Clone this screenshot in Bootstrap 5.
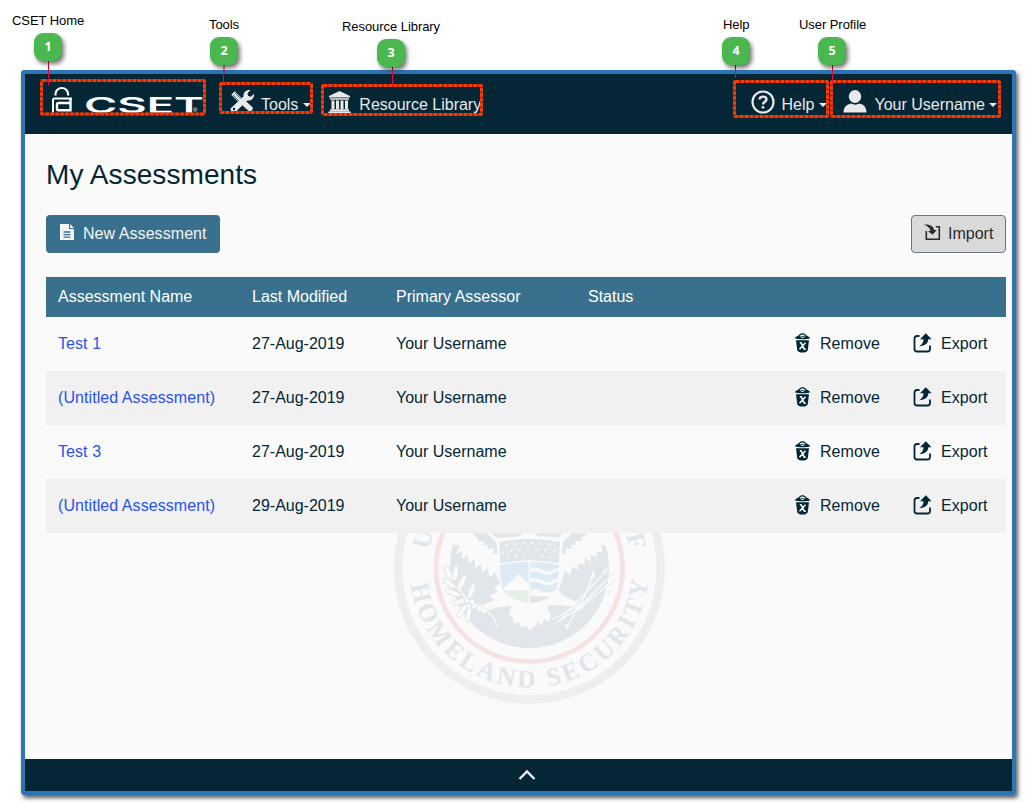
<!DOCTYPE html>
<html lang="en">
<head>
<meta charset="utf-8">
<title>CSET - My Assessments</title>
<link href="https://cdn.jsdelivr.net/npm/bootstrap@5.3.0/dist/css/bootstrap.min.css" rel="stylesheet">
<style>
body{font-family:"Liberation Sans",Arial,sans-serif;width:1025px;height:804px;overflow:hidden;background:#fff;color:#042635}
.app-frame{margin:70px 9px 0 21px;height:725px;border:4px solid #2e75b6;border-radius:3px;box-shadow:2px 3px 4px rgba(0,0,0,.65)}
.top-bar{height:60px;background:#042635;flex:none;padding-top:12px}
.top-bar .nav-link{color:#e9e9e9;padding:0;line-height:24px;white-space:nowrap;margin-top:2px}
.top-bar svg{flex:none;display:block}
.nav-text{margin:5px 0 0 7px}
.tick{border:4px solid transparent;border-top-color:#e9e9e9;border-bottom:0;margin:15px 0 0 4px;flex:none}
.page-main{background:#fafafa;padding:25px 6px 0 21px}
.page-main h1{font-size:28px;line-height:32px;margin:0 0 24px;font-weight:400;letter-spacing:.08px}
.btn-new{background:#38708e;color:#f4f4f4;height:38px;width:174px;border-radius:4px;padding:0 0 0 14px}
.btn-new:hover{background:#2f627d;color:#fff}
.btn-import{background:#d9d9d9;color:#2b2b2b;border:1px solid #6c757d;height:38px;width:95px;border-radius:4px;padding:0 0 0 13px}
.grid-table{margin:24px 0 0;table-layout:fixed;position:relative;z-index:1;width:960px;border-collapse:collapse}
.grid-table th{background:#38708e;color:#fff;font-weight:400;height:40px;padding:0 12px;line-height:24px}
.grid-table td{background:#fafafa;height:54px;padding:0 12px;line-height:24px;white-space:nowrap;vertical-align:middle}
.grid-table tr:nth-child(even) td{background:#f1f1f1}
.grid-table a{color:#2a52ea;text-decoration:none;letter-spacing:.07px}
.grid-table .act{padding:0}
.act div{display:flex;align-items:center;letter-spacing:.05px}
.act svg{margin:0 9px 3px 0;flex:none}
.seal{position:absolute;left:355px;top:386px}
.bottom-bar{height:32px;background:#042635;flex:none}
.notes{position:absolute;left:0;top:0;pointer-events:none}
.note-label{position:absolute;font-size:13px;line-height:16px;color:#000;white-space:nowrap;letter-spacing:-.06px}
.note-num{position:absolute;width:28px;height:28px;border-radius:9px;background:#4bb74f;color:#fff;font:bold 12.5px/28px "Open Sans","Liberation Sans",sans-serif;text-align:center;box-shadow:2px 3px 4px rgba(0,0,0,.55)}
</style>
</head>
<body class="position-relative">
<svg width="0" height="0" class="position-absolute">
  <symbol id="trash" viewBox="0 0 16 20">
    <path fill="#042635" d="M.3 5.200C1 3.800 3.200 3 4.400 2.200 5.200.8 6.500.3 8 .3s2.800.5 3.600 1.900C12.800 3 15 3.800 15.700 5.200 13 6.700 3 6.700.3 5.200zM1.500 7.300h13L13.300 17c-.3 1.500-2 2.600-5.300 2.600S3 18.500 2.700 17z"/>
    <path fill="none" stroke="#fafafa" stroke-width="1.100" d="M5.500 3.400Q8 1 10.500 3.400M6.500 4.300h3"/>
    <path fill="none" stroke="#fafafa" stroke-width="1.500" d="M5.300 9.800h1.300l3.200 6.400h1.500M11 9.800 5 16.300"/>
  </symbol>
  <symbol id="export" viewBox="0 0 19 20">
    <path fill="none" stroke="#042635" stroke-width="1.800" d="M6.500 3H4Q1.500 3 1.500 5.500v10.500Q1.500 18.500 4 18.500h10.500q2.500 0 2.500-2.500v-3.500"/>
    <path fill="#042635" d="M12.800.3 18.600 6.300h-3.300C15.300 10 12.500 12.800 6 13.200 9.500 11.500 10.500 9 10.500 6.300H7z"/>
  </symbol>
</svg>

<div class="app-frame d-flex flex-column">
  <nav class="top-bar d-flex align-items-start">
    <a href="#" aria-label="CSET Home" style="margin-left:25px">
      <svg width="155" height="36" viewBox="50 86 155 36">
        <path fill="none" stroke="#fff" stroke-width="2.200" d="M55.500 95.500v-1.500a6.300 6 0 0 1 12.600 0v1.500"/>
        <path fill="none" stroke="#fff" stroke-width="2" d="M72 98.500H54.500q-1.500 0-1.500 1.500V113"/>
        <path fill="none" stroke="#fff" stroke-width="2.400" d="M71 103H58.500q-1.500 0-1.500 1.500v4.500q0 1.300 1.500 1.300H70.500V98.500"/>
        <text x="84" y="112.500" font-family="Inter, sans-serif" font-size="21.500" font-weight="600" fill="#fff" textLength="120" lengthAdjust="spacingAndGlyphs">CSET</text>
        <text x="193" y="112" font-size="6" fill="#fff" font-family="Liberation Sans, sans-serif">®</text>
      </svg>
    </a>
    <a class="nav-link d-flex" href="#" style="margin-left:25px">
      <svg width="25" height="26" viewBox="0 0 25 26" style="margin-top:1px">
        <path stroke="#e9e9e9" stroke-width="5" d="M3 4 11 12"/>
        <path stroke="#042635" stroke-width=".7" d="M3 6l6 6M5 4l6 6"/>
        <path stroke="#e9e9e9" stroke-width="2" d="M10 11l5 5"/>
        <path stroke="#e9e9e9" stroke-width="5.500" stroke-linecap="round" d="M15.500 15.500 20 19.500"/>
        <path fill="#e9e9e9" d="M1 19 13.500 7.500C13 3.500 16 .4 20.500 1L17.500 4.200l.7 2.800 2.800.7 2.800-3c1 4-2.300 7.300-6.300 6.800L6 22.500C2.500 24-.5 22 1 19z"/>
        <circle cx="4" cy="20" r="1.200" fill="#042635"/>
      </svg>
      <span class="nav-text" style="margin-left:6px">Tools</span><i class="tick" style="margin-left:5px"></i>
    </a>
    <a class="nav-link d-flex" href="#" style="margin-left:17px">
      <svg width="23" height="23" viewBox="0 0 23 23" fill="#e9e9e9" style="margin-top:3px">
        <path d="M11.500 0 22 5v1.500H1V5zM2 7.300h19v1.500H2zM3.500 9.500h3v8.500h-3zM8 9.500h3v8.500H8zM12.500 9.500h3v8.500h-3zM17 9.500h3v8.500h-3zM2 18.300h19V20.300H2zM.3 20.600h22.400V23H.3z"/>
      </svg>
      <span class="nav-text" style="margin-left:8px">Resource Library</span>
    </a>
    <a class="nav-link d-flex ms-auto" href="#">
      <svg width="24" height="24" viewBox="0 0 24 24" style="margin-top:2px">
        <circle cx="12" cy="12" r="10.500" fill="none" stroke="#e9e9e9" stroke-width="2.200"/>
        <path fill="none" stroke="#e9e9e9" stroke-width="2.400" d="M8.500 9.500C8.700 5.700 15.500 5.700 15.500 9.400 15.500 11.700 12 11.800 12 14.500"/><circle cx="12" cy="17.300" r="1.400" fill="#e9e9e9"/>
      </svg>
      <span class="nav-text">Help</span><i class="tick" style="margin-left:5px"></i>
    </a>
    <a class="nav-link d-flex" href="#" style="margin:2px 15px 0 16px">
      <svg width="24" height="23" viewBox="0 0 24 23" fill="#e9e9e9" style="margin-top:2px"><ellipse cx="12" cy="6.500" rx="6.200" ry="6.500"/><path d="M.5 22.500C.5 17 4 14.500 8 13.500c3 1.500 5.500 1.500 8.500 0 4 1 7 3.500 7 9z"/></svg>
      <span class="nav-text">Your Username</span><i class="tick"></i>
    </a>
  </nav>

  <main class="page-main flex-grow-1 position-relative">
    <h1>My Assessments</h1>
    <div class="d-flex justify-content-between">
      <button class="btn btn-new d-flex align-items-center">
        <svg width="14" height="16" viewBox="0 0 14 16" style="margin:0 0 4px -1px"><path fill="#f4f4f4" d="M0 0h9v5h5v11H0zM10 0l4 4h-4z"/><path stroke="#38708e" stroke-width="1.300" d="M3.500 8h7M3.500 10.600h7M3.500 13.200h7"/></svg>
        <span style="margin-left:9px;letter-spacing:.06px">New Assessment</span>
      </button>
      <button class="btn btn-import d-flex align-items-center">
        <svg width="17" height="17" viewBox="0 0 17 17" style="margin:0 1px 4px -1px"><path fill="none" stroke="#2b2b2b" stroke-width="1.600" d="M2.300 7v8.200h13V2.800h-3.500"/><path fill="#2b2b2b" d="M0 .5C6 .3 9.500 2 10.200 6h2.600L8.500 10.800 4 7.200 6.500 6.700C6 4 3.500 2 0 .5z"/></svg>
        <span style="margin-left:6px">Import</span>
      </button>
    </div>
    <table class="grid-table">
      <colgroup><col style="width:194px"><col style="width:144px"><col style="width:192px"><col style="width:218px"><col style="width:119px"><col style="width:93px"></colgroup>
      <thead><tr><th>Assessment Name</th><th>Last Modified</th><th>Primary Assessor</th><th>Status</th><th></th><th></th></tr></thead>
      <tbody>
        <tr><td><a href="#">Test 1</a></td><td>27-Aug-2019</td><td>Your Username</td><td></td><td class="act"><div><svg width="17" height="20"><use href="#trash"/></svg>Remove</div></td><td class="act"><div><svg width="19" height="20"><use href="#export"/></svg>Export</div></td></tr>
        <tr><td><a href="#">(Untitled Assessment)</a></td><td>27-Aug-2019</td><td>Your Username</td><td></td><td class="act"><div><svg width="17" height="20"><use href="#trash"/></svg>Remove</div></td><td class="act"><div><svg width="19" height="20"><use href="#export"/></svg>Export</div></td></tr>
        <tr><td><a href="#">Test 3</a></td><td>27-Aug-2019</td><td>Your Username</td><td></td><td class="act"><div><svg width="17" height="20"><use href="#trash"/></svg>Remove</div></td><td class="act"><div><svg width="19" height="20"><use href="#export"/></svg>Export</div></td></tr>
        <tr><td><a href="#">(Untitled Assessment)</a></td><td>29-Aug-2019</td><td>Your Username</td><td></td><td class="act"><div><svg width="17" height="20"><use href="#trash"/></svg>Remove</div></td><td class="act"><div><svg width="19" height="20"><use href="#export"/></svg>Export</div></td></tr>
      </tbody>
    </table>

    <svg class="seal" width="300" height="200" viewBox="0 0 900 600">
      <defs><path id="arc" d="M90 145A358 358 0 0 0 806 145"/></defs>
      <circle cx="448" cy="145" r="394" fill="none" stroke="#eee" stroke-width="25"/>
      <circle cx="448" cy="145" r="280" fill="none" stroke="#f6e2e3" stroke-width="14"/>
      <circle cx="448" cy="145" r="239" fill="#e1e6ea"/>
      <!-- wings -->
      <path fill="#fafafa" d="M200 30H700V75L662 75 668 98 650 94 652 112 632 104 632 124 614 114 614 136 596 128 594 150 576 140 572 165 554 152 545 188 535 210 545 222 575 240 600 245 590 262 545 256 500 256 512 285 506 305 492 295 487 318 473 305 462 322 448 330 437 318 424 322 416 305 402 312 398 290 385 285 395 256 355 262 310 275 300 258 345 240 330 228 355 215 342 205 360 190 345 155 330 172 322 145 306 158 302 132 286 145 284 118 266 130 264 104 246 116 246 94 228 102 240 75H200z"/>
      <path fill="#e1e6ea" d="M275 40 295 56 290 64 312 64 308 76 326 74 322 88 342 84 340 100 352 102 350 68 320 40zM330 36h100l-14 14-64 4zM460 36h88l-10 16-64-3zM622 40 602 56 606 64 584 64 590 76 572 74 576 88 556 84 558 100 546 102 548 68 576 40z"/>
      <!-- shield -->
      <path fill="#e1e6ea" d="M358 67Q448 45 540 67L537 130Q448 112 360 130z"/>
      <g fill="none" stroke="#fafafa" stroke-width="6" stroke-dasharray="6 20"><path d="M376 76Q448 62 524 76"/><path d="M364 96Q448 80 532 96"/><path d="M380 113Q448 98 522 113"/></g>
      <path fill="#dfebf4" d="M360 135Q400 126 446 126V212H369Q360 180 360 135zM451 126Q500 126 537 135Q537 190 527 215L451 220z"/>
      <path fill="#fafafa" d="M369 212 374 200 398 180 416 162 430 176 446 190V212z"/>
      <path fill="#e3f0e6" d="M369 212H446V252Q390 238 369 212z"/>
      <path fill="#e1e6ea" d="M451 226Q480 232 511 228 490 246 451 250z"/>
      <path fill="none" stroke="#fafafa" stroke-width="9" d="M451 151Q470 144 485 154T515 156T540 148M451 183Q470 176 485 186T515 188T540 180M451 216Q470 209 485 219T530 216"/>
      <!-- olive branch and arrows -->
      <g fill="#fafafa" stroke="#e1e6ea" stroke-width="3">
        <ellipse cx="205" cy="158" rx="8" ry="25" transform="rotate(-25 205 158)"/><ellipse cx="226" cy="160" rx="8" ry="24" transform="rotate(10 226 160)"/><ellipse cx="208" cy="190" rx="8" ry="24" transform="rotate(-55 208 190)"/><ellipse cx="246" cy="188" rx="8" ry="24" transform="rotate(25 246 188)"/><ellipse cx="218" cy="218" rx="8" ry="24" transform="rotate(-70 218 218)"/><ellipse cx="275" cy="212" rx="8" ry="24" transform="rotate(20 275 212)"/><ellipse cx="240" cy="245" rx="8" ry="24" transform="rotate(75 240 245)"/><ellipse cx="246" cy="272" rx="8" ry="24" transform="rotate(35 246 272)"/><ellipse cx="266" cy="280" rx="8" ry="26" transform="rotate(8 266 280)"/>
        <circle cx="260" cy="242" r="7"/><circle cx="278" cy="245" r="7"/><circle cx="266" cy="258" r="7"/><circle cx="282" cy="260" r="7"/>
        <circle cx="300" cy="265" r="10"/><circle cx="312" cy="272" r="9"/><circle cx="595" cy="262" r="12"/>
      </g>
      <path fill="none" stroke="#fafafa" stroke-width="4" d="M230 200 262 240 300 262Q340 280 352 318M560 325 590 268M518 298 585 262M530 308 600 262 645 152M540 300 685 145M600 260 700 160M604 262 690 190"/>
      <path fill="#fafafa" d="M640 150l-10 24h16zM684 138l-18 18 12 8zM710 136l-20 16 12 10zM695 190l-22 6 8 14zM558 330l-4-18 14 4z"/>
      <path fill="none" stroke="#e1e6ea" stroke-width="3" d="M665 165l22-24M675 180l30-22M680 200l28-20M682 222l14-14"/>
      <g font-family="Liberation Serif, serif" fill="#e0e6eb" font-size="76" font-weight="bold">
        <text textLength="1036"><textPath href="#arc" startOffset="50" textLength="1036">HOMELAND SECURITY</textPath></text>
        <text transform="translate(448 145) rotate(-74.500)" text-anchor="middle" y="-306">U</text>
        <text transform="translate(448 145) rotate(75.500)" text-anchor="middle" y="-306">F</text>
      </g>
    </svg>
  </main>

  <footer class="bottom-bar d-flex justify-content-center align-items-center">
    <svg width="18" height="12" viewBox="0 0 18 12" style="margin-left:16px"><path fill="none" stroke="#eee" stroke-width="2.300" d="M1.500 10 9 2.500 16.500 10"/></svg>
  </footer>
</div>

<!-- numbered callouts over the window -->
<div class="notes">
  <svg class="d-block" width="1025" height="130" fill="none">
    <g stroke="#7d2a1a" stroke-width="3">
      <rect x="41.500" y="80.500" width="163" height="33.500" rx="1"/><rect x="220.500" y="83.500" width="91" height="29" rx="1"/><rect x="322.500" y="85.500" width="159" height="29" rx="1"/><rect x="734.500" y="81.500" width="93" height="35" rx="1"/><rect x="831.500" y="81.500" width="168" height="35" rx="1"/>
    </g>
    <g stroke="#ff3a00" stroke-width="3" stroke-dasharray="3.600 1.400">
      <rect x="41.500" y="80.500" width="163" height="33.500" rx="1"/><rect x="220.500" y="83.500" width="91" height="29" rx="1"/><rect x="322.500" y="85.500" width="159" height="29" rx="1"/><rect x="734.500" y="81.500" width="93" height="35" rx="1"/><rect x="831.500" y="81.500" width="168" height="35" rx="1"/>
    </g>
    <path stroke="#e8043c" d="M48.500 60V85.500M224.200 64 223.300 83M392.500 66V86M735.500 64V78M832.500 64V83"/>
  </svg>
  <span class="note-label" style="left:12px;top:13px">CSET Home</span><span class="note-num" style="left:34px;top:33px">1</span>
  <span class="note-label" style="left:209px;top:17px">Tools</span><span class="note-num" style="left:210px;top:37px">2</span>
  <span class="note-label" style="left:342px;top:19px">Resource Library</span><span class="note-num" style="left:377px;top:39px">3</span>
  <span class="note-label" style="left:723px;top:17px">Help</span><span class="note-num" style="left:722px;top:37px">4</span>
  <span class="note-label" style="left:799px;top:17px">User Profile</span><span class="note-num" style="left:818px;top:37px">5</span>
</div>
<script src="https://cdn.jsdelivr.net/npm/bootstrap@5.3.0/dist/js/bootstrap.bundle.min.js"></script>
</body>
</html>
